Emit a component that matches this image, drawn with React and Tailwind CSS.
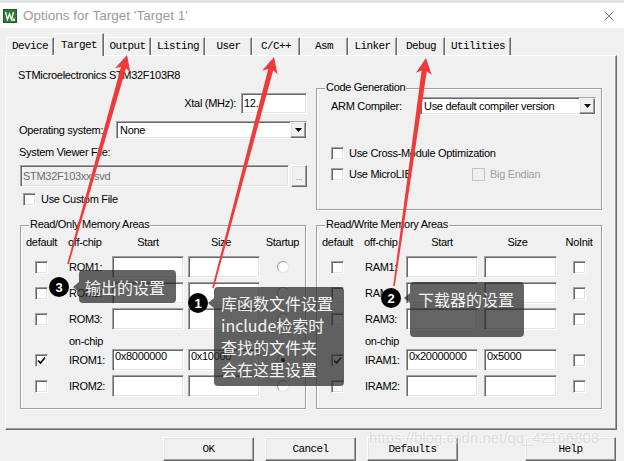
import React from "react";

const UI = "font-['Liberation_Sans',Arial,sans-serif] text-[11px] tracking-[-0.3px] leading-[13px] text-black";
const MONO = "font-['Liberation_Mono','Courier_New',monospace] text-[11px] tracking-[-0.6px] text-black";
const CJK = "font-['Noto_Sans_CJK_SC','Noto_Sans',sans-serif] text-[16px] leading-[22px] tracking-normal text-[#f4f4f4]";
const SUNKEN = "border border-t-[#a0a0a0] border-l-[#a0a0a0] border-b-white border-r-white shadow-[inset_1px_1px_0_#696969,inset_-1px_-1px_0_#e3e3e3]";
const RAISED = "border border-t-white border-l-white border-b-[#696969] border-r-[#696969] shadow-[inset_-1px_-1px_0_#a0a0a0,inset_1px_1px_0_#e3e3e3]";
const ETCHED = "border border-[#a0a0a0] shadow-[inset_1px_1px_0_#fff,1px_1px_0_#fff]";

function Check({ checked, disabled }) {
  return (
    <div
      className={`w-[13px] h-[13px] shrink-0 flex items-center justify-center ${
        disabled ? "bg-[#f0f0f0] border border-[#c4c4c4]" : `bg-white ${SUNKEN}`
      }`}
    >
      {checked && (
        <svg width="9" height="9" viewBox="0 0 9 9">
          <path d="M1 4.5 L3.5 7 L8 1.5" stroke="#000" strokeWidth="1.7" fill="none" />
        </svg>
      )}
    </div>
  );
}

function Radio({ on }) {
  return (
    <div className="w-[12px] h-[12px] rounded-full bg-white border border-[#a0a0a0] border-b-[#e3e3e3] border-r-[#e3e3e3] flex items-center justify-center">
      {on && <div className="w-[4px] h-[4px] rounded-full bg-black" />}
    </div>
  );
}

function Field({ cls, text }) {
  return <div className={`${cls} bg-white ${SUNKEN} pl-[2px] shrink-0 overflow-hidden whitespace-nowrap`}>{text}</div>;
}

function DropBtn() {
  return (
    <div className={`w-[16px] shrink-0 bg-[#f0f0f0] ${RAISED} flex items-center justify-center`}>
      <svg width="7" height="4" viewBox="0 0 7 4">
        <path d="M0 0H7L3.5 4Z" fill="#000" />
      </svg>
    </div>
  );
}

function Select({ cls, text }) {
  return (
    <div className={`${cls} bg-white ${SUNKEN} flex items-stretch shrink-0`}>
      <div className="flex-1 pl-[3px] flex items-center whitespace-nowrap">{text}</div>
      <DropBtn />
    </div>
  );
}

function Group({ title, cls, children }) {
  return (
    <div className={`relative ${ETCHED} ${cls}`}>
      <div className="absolute left-[8px] top-[-8px] px-[1px] bg-[#f0f0f0] whitespace-nowrap">{title}</div>
      {children}
    </div>
  );
}

function MemRow({ c2, gap, sizeCls, label, start, size, checked, last, cls }) {
  return (
    <div className={`flex items-center h-[22px] ${cls}`}>
      <div className="w-[41px] flex justify-center">
        <Check checked={checked} />
      </div>
      <div className={c2}>{label}</div>
      <Field cls="w-[72px] h-[22px]" text={start} />
      <div className={gap} />
      <Field cls={sizeCls} text={size} />
      <div className="flex-1 flex justify-center">{last}</div>
    </div>
  );
}

function MemGroup({ title, c2, c2h, gap, sizeCls, sizeHead, lastHead, prefix, lastFn, iv, cls }) {
  const r = (extra, label, start, size, checked, on) => (
    <MemRow
      cls={extra}
      c2={c2}
      gap={gap}
      sizeCls={sizeCls}
      label={label}
      start={start}
      size={size}
      checked={checked}
      last={lastFn(on)}
    />
  );
  return (
    <Group title={title} cls={`h-[184px] pt-[10px] ${cls}`}>
      <div className="flex items-center h-[13px]">
        <div className="w-[41px] text-center">default</div>
        <div className={c2h}>off-chip</div>
        <div className="w-[72px] text-center">Start</div>
        <div className={gap} />
        <div className={`${sizeHead} text-center pr-[6px]`}>Size</div>
        <div className="flex-1 text-center">{lastHead}</div>
      </div>
      {r("mt-[7px]", `${prefix}1:`, "", "", false, false)}
      {r("mt-[4px]", `${prefix}2:`, "", "", false, false)}
      {r("mt-[4px]", `${prefix}3:`, "", "", false, false)}
      <div className="mt-[5px] h-[13px] flex">
        <div className="w-[41px]" />
        <div className={c2}>on-chip</div>
      </div>
      {r("mt-[1px]", `I${prefix}1:`, iv[0], iv[1], true, true)}
      {r("mt-[4px]", `I${prefix}2:`, "", "", false, false)}
    </Group>
  );
}

const TABS = [
  ["Device", "w-[48px]"],
  ["Target", "w-[50px]"],
  ["Output", "w-[47px]"],
  ["Listing", "w-[54px]"],
  ["User", "w-[47px]"],
  ["C/C++", "w-[48px]"],
  ["Asm", "w-[48px]"],
  ["Linker", "w-[49px]"],
  ["Debug", "w-[48px]"],
  ["Utilities", "w-[66px]"],
];

function arrowPoints(tx, ty, ex, ey) {
  const dx = ex - tx;
  const dy = ey - ty;
  const len = Math.hypot(dx, dy);
  const ux = dx / len;
  const uy = dy / len;
  const nx = -uy;
  const ny = ux;
  const L = 16;
  const W = 8;
  const s0 = 2.6;
  const s1 = 0.8;
  const p = (a, b) => `${(tx + ux * a + nx * b).toFixed(1)},${(ty + uy * a + ny * b).toFixed(1)}`;
  return [p(0, 0), p(L, W), p(L - 3, s0), p(len, s1), p(len, -s1), p(L - 3, -s0), p(L, -W)].join(" ");
}

function Arrows() {
  return (
    <svg className="absolute left-0 top-0 pointer-events-none" width="624" height="461" viewBox="0 0 624 461">
      <polygon points={arrowPoints(127, 55, 68, 264)} fill="#f03a3a" />
      <polygon points={arrowPoints(274, 57, 213, 288)} fill="#f03a3a" />
      <polygon points={arrowPoints(426, 58, 394, 286)} fill="#f03a3a" />
    </svg>
  );
}

function Num({ n, cls }) {
  return (
    <div
      className={`absolute w-[20px] h-[20px] rounded-full bg-black text-white flex items-center justify-center font-['Liberation_Sans',Arial,sans-serif] text-[13px] font-bold tracking-normal ${cls}`}
    >
      {n}
    </div>
  );
}

function Tips() {
  return (
    <>
      <Num n="3" cls="left-[49px] top-[277px]" />
      <div className="absolute left-[73px] top-[282px] w-0 h-0 border-y-[5px] border-y-transparent border-r-[6px] border-r-[rgba(40,40,40,0.72)]" />
      <div className={`absolute left-[79px] top-[270px] w-[97px] h-[33px] rounded-[4px] bg-[rgba(40,40,40,0.72)] pl-[6px] pt-[6px] ${CJK}`}>
        输出的设置
      </div>
      <Num n="1" cls="left-[188px] top-[293px]" />
      <div className="absolute left-[208px] top-[298px] w-0 h-0 border-y-[5px] border-y-transparent border-r-[6px] border-r-[rgba(40,40,40,0.72)]" />
      <div className={`absolute left-[214px] top-[287px] w-[130px] h-[99px] rounded-[4px] bg-[rgba(40,40,40,0.72)] pl-[7px] pt-[5px] ${CJK}`}>
        <div>库函数文件设置</div>
        <div>include检索时</div>
        <div>查找的文件夹</div>
        <div>会在这里设置</div>
      </div>
      <Num n="2" cls="left-[381px] top-[288px]" />
      <div className="absolute left-[404px] top-[293px] w-0 h-0 border-y-[5px] border-y-transparent border-r-[6px] border-r-[rgba(40,40,40,0.72)]" />
      <div className={`absolute left-[410px] top-[282px] w-[114px] h-[55px] rounded-[4px] bg-[rgba(40,40,40,0.72)] pl-[8px] pt-[6px] ${CJK}`}>
        下载器的设置
      </div>
    </>
  );
}

export default function App() {
  return (
    <div className={`relative w-[624px] h-[461px] overflow-hidden bg-[#f0f0f0] flex flex-col ${UI}`}>
      <div className="h-[3px] shrink-0 bg-[#e1e1e1]" />
      <div className="h-[25px] shrink-0 bg-white flex items-center pl-[3px]">
        <svg width="14" height="14" viewBox="0 0 14 14">
          <rect x="0.5" y="0.5" width="13" height="13" fill="#2f7d32" stroke="#1f5c22" />
          <path d="M2.5 3 L4.5 10.5 L6.5 5 L8.5 10.5 L10.5 3" stroke="#fff" strokeWidth="1.3" fill="none" />
          <rect x="9.5" y="9.5" width="2.5" height="2.5" fill="#fff" />
        </svg>
        <div className="ml-[6px] font-['Liberation_Sans',Arial,sans-serif] text-[13.5px] tracking-normal text-[#9a9a9a]">
          Options for Target 'Target 1'
        </div>
        <svg className="ml-auto mr-[10px]" width="10" height="10" viewBox="0 0 10 10">
          <path d="M0.5 0.5 L9.5 9.5 M9.5 0.5 L0.5 9.5" stroke="#7a7a7a" strokeWidth="1" />
        </svg>
      </div>
      <div className={`h-[27px] shrink-0 flex items-end pl-[6px] ${MONO}`}>
        {TABS.map(([t, w]) =>
          t === "Target" ? (
            <div
              key={t}
              className={`${w} h-[23px] -mb-px relative z-10 bg-[#f0f0f0] border-l border-t border-r border-white border-r-[#696969] shadow-[inset_-1px_0_0_#a0a0a0] flex items-center justify-center`}
            >
              {t}
            </div>
          ) : (
            <div
              key={t}
              className={`${w} h-[18px] bg-[#f0f0f0] border-l border-t border-r border-white border-r-[#696969] shadow-[inset_-1px_0_0_#a0a0a0] flex items-center justify-center`}
            >
              {t}
            </div>
          )
        )}
      </div>
      <div className="ml-[5px] w-[612px] h-[375px] shrink-0 flex bg-[#f0f0f0] border border-t-white border-l-white border-b-[#696969] border-r-[#696969] shadow-[inset_-1px_-1px_0_#a0a0a0]">
        <div className="ml-[13px] w-[288px] flex flex-col">
          <div className="mt-[13px] h-[13px] -ml-[1px] whitespace-nowrap">STMicroelectronics STM32F103R8</div>
          <div className="mt-[11px] h-[21px] flex items-center justify-end">
            <span>Xtal (MHz):</span>
            <div className={`ml-[5px] w-[66px] h-[21px] bg-white ${SUNKEN} pl-[2px] flex items-center`}>12.</div>
          </div>
          <div className="mt-[7px] h-[18px] flex items-center">
            <div className="w-[97px]">Operating system:</div>
            <Select cls="w-[191px] h-[18px]" text="None" />
          </div>
          <div className="mt-[7px] h-[13px]">System Viewer File:</div>
          <div className="mt-[6px] h-[22px] flex">
            <div className={`ml-[1px] w-[269px] h-[22px] bg-[#f0f0f0] ${SUNKEN} pl-[2px] flex items-center text-[#6d6d6d]`}>
              STM32F103xx.svd
            </div>
            <div className={`ml-[2px] w-[16px] h-[22px] ${RAISED} flex items-end justify-center pb-[2px] text-[#8a8a8a] text-[9px]`}>
              ...
            </div>
          </div>
          <div className="mt-[6px] h-[13px] flex items-center">
            <div className="ml-[4px]">
              <Check />
            </div>
            <span className="ml-[5px]">Use Custom File</span>
          </div>
          <MemGroup
            cls="mt-[19px] ml-[1px] w-[286px]"
            title="Read/Only Memory Areas"
            c2="w-[50px] pl-[7px]"
            c2h="w-[50px] pl-[6px]"
            gap="w-[4px]"
            sizeCls="w-[72px] h-[22px]"
            sizeHead="w-[72px]"
            lastHead="Startup"
            prefix="ROM"
            iv={["0x8000000", "0x10000"]}
            lastFn={(on) => <Radio on={on} />}
          />
        </div>
        <div className="ml-[9px] w-[286px] flex flex-col">
          <Group title="Code Generation" cls="mt-[32px] h-[122px]">
            <div className="mt-[8px] h-[18px] flex items-center">
              <div className="ml-[14px] w-[89px]">ARM Compiler:</div>
              <Select cls="w-[176px] h-[18px]" text="Use default compiler version" />
            </div>
            <div className="mt-[32px] h-[13px] flex items-center">
              <div className="ml-[14px]">
                <Check />
              </div>
              <span className="ml-[5px]">Use Cross-Module Optimization</span>
            </div>
            <div className="mt-[8px] h-[13px] flex items-center">
              <div className="ml-[14px] w-[141px] flex items-center">
                <Check />
                <span className="ml-[5px]">Use MicroLIB</span>
              </div>
              <Check disabled />
              <span className="ml-[5px] text-[#a0a0a0]">Big Endian</span>
            </div>
          </Group>
          <MemGroup
            cls="mt-[15px] w-[286px]"
            title="Read/Write Memory Areas"
            c2="w-[48px] pl-[7px]"
            c2h="w-[48px] pl-[6px]"
            gap="w-[6px]"
            sizeCls="w-[73px] h-[22px]"
            sizeHead="w-[73px]"
            lastHead="NoInit"
            prefix="RAM"
            iv={["0x20000000", "0x5000"]}
            lastFn={() => <Check />}
          />
        </div>
      </div>
      <div className={`mt-[7px] flex pl-[163px] gap-[11px] ${MONO}`}>
        <div className={`w-[91px] h-[24px] bg-[#f0f0f0] ${RAISED} flex items-center justify-center`}>OK</div>
        <div className={`w-[91px] h-[24px] bg-[#f0f0f0] ${RAISED} flex items-center justify-center`}>Cancel</div>
        <div className={`w-[91px] h-[24px] bg-[#f0f0f0] ${RAISED} flex items-center justify-center`}>Defaults</div>
        <div className={`ml-[56px] w-[91px] h-[24px] bg-[#f0f0f0] ${RAISED} flex items-center justify-center`}>Help</div>
      </div>
      <div className="absolute left-[369px] top-[431px] font-['Liberation_Sans',Arial,sans-serif] text-[15px] tracking-normal text-[rgba(175,175,175,0.4)] [text-shadow:0_0_2px_#fff] pointer-events-none whitespace-nowrap">
        https://blog.csdn.net/qq_42166808
      </div>
      <Arrows />
      <Tips />
    </div>
  );
}
